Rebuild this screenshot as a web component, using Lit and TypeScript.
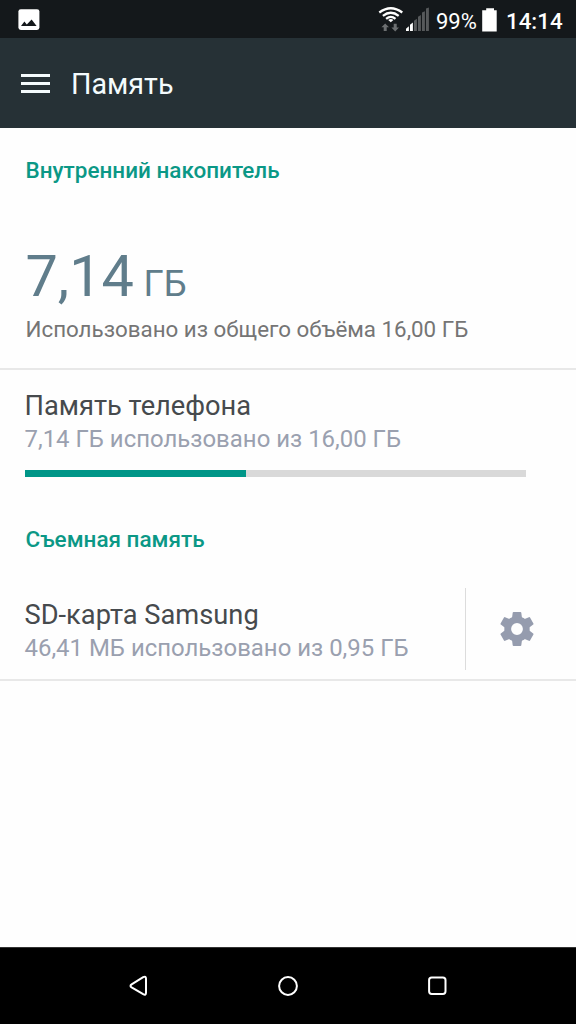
import { LitElement, html, css, svg } from "lit";
import { customElement, property } from "lit/decorators.js";

@customElement("status-bar")
class StatusBar extends LitElement {
  static styles = css`
    :host { display: flex; height: 38px; background: #14181b; color: #fff; align-items: flex-start; }
    .picture { margin: 9px 0 0 18px; }
    .signals { margin-left: auto; }
    .signals, .picture, .battery { display: block; flex: none; }
    .text { line-height: 30px; font-size: 22px; white-space: nowrap; padding-top: 6px; }
    .percent { margin-left: 5px; width: 43px; letter-spacing: -0.05px; padding-top: 7px; }
    .battery { margin: 8px 0 0 3px; }
    .clock { margin-left: 8px; width: 70px; font-weight: 500; font-size: 22.3px; }
  `;
  render() {
    const bars = [0, 1, 2, 3, 4, 5];
    return html`
      <svg class="picture" width="22" height="22" viewBox="0 0 22 22">
        <rect x="0.4" y="0.2" width="21" height="20.8" rx="2.4" fill="#fff" />
        <path d="M3 17 6.4 12.6 8.8 15.4 13.6 10.4 18.6 17Z" fill="#14181b" />
      </svg>
      <svg class="signals" width="53" height="38" viewBox="0 0 53 38">
        <g fill="none" stroke="#fff" stroke-width="2.3">
          <path d="M1.3 12.5Q12.8 4 24.3 12.5" />
          <path d="M4.9 15.8Q12.8 9.7 20.7 15.8" />
          <path d="M8.1 18.8Q12.8 15 17.5 18.8" />
        </g>
        <path d="M10.2 19.9Q12.8 18 15.4 19.9L12.8 22.3Z" fill="#fff" />
        <path d="M7.2 23.4 11 27.3H8.7V31H5.7V27.3H3.4Z" fill="#6c6f71" />
        <path d="M17.2 31.5 13.4 27.6H15.7V23.8H18.7V27.6H21Z" fill="#6c6f71" />
        ${bars.map((i) => svg`<path d=${`M${28 + i * 4} ${31}V${28.8 - i * 4.05}L${30.9 + i * 4} ${26.2 - i * 3.75}V31Z`} fill=${i < 2 ? "#fff" : "#56595b"} />`)}
      </svg>
      <div class="text percent">99%</div>
      <svg class="battery" width="16" height="24" viewBox="0 0 16 24">
        <path d="M4.2 0.2H12V2.2H14.7V23.4H0.2V2.2H4.2Z" fill="#fff" />
      </svg>
      <div class="text clock">14:14</div>
    `;
  }
}

@customElement("app-bar")
class AppBar extends LitElement {
  @property() heading = "";
  static styles = css`
    :host { display: flex; height: 90px; background: #263136; color: #fff; align-items: center; }
    .menu { display: grid; gap: 5px; margin-left: 21px; width: 29px; }
    .line { height: 3px; background: #f4fbfd; }
    .title { margin-left: 21px; font-size: 28.7px; line-height: 40px; padding-top: 2px; white-space: nowrap; color: #f4fbfd; }
  `;
  render() {
    return html`
      <div class="menu"><div class="line"></div><div class="line"></div><div class="line"></div></div>
      <div class="title">${this.heading}</div>
    `;
  }
}

@customElement("storage-volume")
class StorageVolume extends LitElement {
  @property() name = "";
  @property() usage = "";
  static styles = css`
    :host { display: block; white-space: nowrap; padding-left: 24.5px; }
    .name { font-size: 27.25px; line-height: 34px; color: #464a4d; }
    .usage { font-size: 23.94px; line-height: 30px; margin-top: 1px; color: #9aa0af; }
  `;
  render() {
    return html`<div class="name">${this.name}</div><div class="usage">${this.usage}</div>`;
  }
}

@customElement("nav-bar")
class NavBar extends LitElement {
  static styles = css`
    :host { display: flex; height: 76px; background: #000; border-top: 1px solid #333; justify-content: center; gap: 125px; align-items: center; }
    .key { display: block; fill: none; stroke: #fff; stroke-width: 2; stroke-linejoin: round; }
  `;
  render() {
    return html`
      <svg class="key" width="24" height="24" viewBox="0 0 24 24"><path d="M4.6 10.4 16.2 3.2Q19 1.7 19 4.8V18.8Q19 21.7 16.2 20.2L4.6 13.4Q2.4 11.9 4.6 10.4Z" /></svg>
      <svg class="key" width="24" height="24" viewBox="0 0 24 24"><circle cx="12" cy="12" r="8.9" /></svg>
      <svg class="key" width="24" height="24" viewBox="0 0 24 24"><rect x="4.1" y="3.5" width="16.4" height="16.4" rx="2.6" /></svg>
    `;
  }
}

@customElement("app-root")
class AppRoot extends LitElement {
  @property({ type: Number }) used = 44.1;
  static styles = css`
    :host { display: flex; flex-direction: column; height: 1024px; overflow: hidden; background: #fefefe; font-family: Roboto, sans-serif; }
    .content { flex: 1; }
    .category { font-size: 22.5px; line-height: 30px; font-weight: 500; color: #0b9886; padding-left: 25.5px; white-space: nowrap; }
    .internal { margin-top: 27px; }
    .total { display: flex; align-items: baseline; margin-top: 57px; padding-left: 25.5px; height: 70px; line-height: 70px; font-size: 57.6px; color: #607d8b; white-space: nowrap; }
    .unit { font-size: 36.4px; margin-left: 9.5px; }
    .summary { font-size: 22.35px; line-height: 30px; margin-top: 2px; padding-left: 25.5px; color: #757575; white-space: nowrap; }
    .divider { height: 2px; background: #e8e8e8; }
    .divider.first { margin-top: 24px; }
    .phone { margin-top: 19px; }
    .bar { margin: 16px 50px 0 24.5px; height: 6.5px; background: #d9d9d9; }
    .fill { height: 100%; background: #009688; }
    .removable { margin-top: 47.5px; }
    .card { display: flex; margin-top: 34px; height: 91px; }
    .sd { padding-top: 10px; flex: 1; }
    .action { width: 111px; height: 82px; box-sizing: border-box; border-left: 1px solid #dcdcdc; display: grid; place-items: center; padding-right: 8px; }
    .gear { display: block; fill: #959cae; }
  `;
  render() {
    const teeth = [0, 60, 120, 180, 240, 300];
    return html`
      <status-bar></status-bar>
      <app-bar heading="Память"></app-bar>
      <div class="content">
        <div class="category internal">Внутренний накопитель</div>
        <div class="total"><span>7,14</span><span class="unit">ГБ</span></div>
        <div class="summary">Использовано из общего объёма 16,00 ГБ</div>
        <div class="divider first"></div>
        <storage-volume class="phone" name="Память телефона" usage="7,14 ГБ использовано из 16,00 ГБ"></storage-volume>
        <div class="bar"><div class="fill" style="width:${this.used}%"></div></div>
        <div class="category removable">Съемная память</div>
        <div class="card">
          <storage-volume class="sd" name="SD-карта Samsung" usage="46,41 МБ использовано из 0,95 ГБ"></storage-volume>
          <div class="action">
            <svg class="gear" width="36" height="36" viewBox="-18 -18 36 36">
              <circle r="9.3" fill="none" stroke="#959cae" stroke-width="6.8" />
              ${teeth.map((a) => svg`<path transform=${`rotate(${a})`} d="M-3.4-17H3.4Q4.2-17 4.3-16.2L5-11H-5L-4.3-16.2Q-4.2-17-3.4-17Z" />`)}
            </svg>
          </div>
        </div>
        <div class="divider"></div>
      </div>
      <nav-bar></nav-bar>
    `;
  }
}
